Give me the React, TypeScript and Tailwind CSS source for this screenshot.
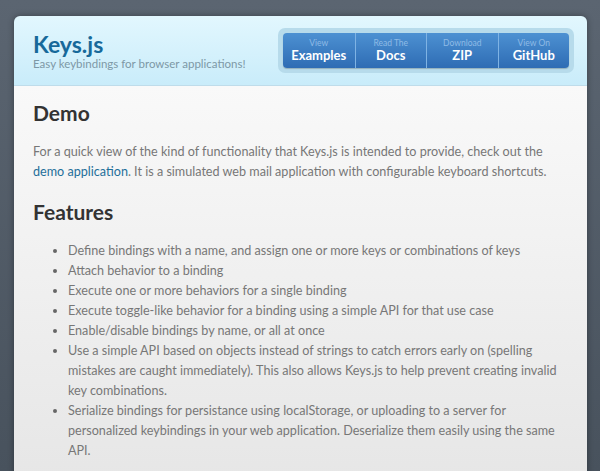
const links = [
  { top: 'View', label: 'Examples' },
  { top: 'Read The', label: 'Docs' },
  { top: 'Download', label: 'ZIP' },
  { top: 'View On', label: 'GitHub' },
];

const features = [
  'Define bindings with a name, and assign one or more keys or combinations of keys',
  'Attach behavior to a binding',
  'Execute one or more behaviors for a single binding',
  'Execute toggle-like behavior for a binding using a simple API for that use case',
  'Enable/disable bindings by name, or all at once',
  'Use a simple API based on objects instead of strings to catch errors early on (spelling mistakes are caught immediately). This also allows Keys.js to help prevent creating invalid key combinations.',
  'Serialize bindings for persistance using localStorage, or uploading to a server for personalized keybindings in your web application. Deserialize them easily using the same API.',
];

export default function App() {
  return (
    <div className="h-[471px] overflow-hidden bg-gradient-to-b from-[#5b6571] to-[#48525d] pl-[14px] pr-[13px] pt-[16px] font-['Lato',sans-serif]">
      <div className="overflow-hidden rounded-t-[6px] shadow-[0_0_6px_rgba(0,0,0,0.35)]">
        <header className="flex h-[70px] items-center justify-between border-b border-[#bfdcea] bg-gradient-to-b from-[#e2f7fe] to-[#c9ecfa] pl-[19px] pr-[13px]">
          <div>
            <h1 className="text-[23px] font-bold leading-[26px] text-[#17699a]">Keys.js</h1>
            <p className="text-[11.5px] leading-[14px] text-[#7d98a6]">Easy keybindings for browser applications!</p>
          </div>
          <nav className="rounded-[7px] bg-[#b7dbeb] p-[5px]">
            <div className="flex overflow-hidden rounded-[4px] bg-gradient-to-b from-[#4d91d2] to-[#2e6cb4] shadow-[0_1px_1px_rgba(0,0,0,0.2)]">
              {links.map((link, i) => (
                <a
                  key={link.label}
                  href="#"
                  className={`flex h-[35px] w-[71.5px] flex-col items-center justify-center ${i > 0 ? 'border-l border-[#7fb3e4]' : ''}`}
                >
                  <span className="text-[8.5px] leading-[9px] text-[#8fbbe6]">{link.top}</span>
                  <span className="text-[13px] font-bold leading-[15px] text-white">{link.label}</span>
                </a>
              ))}
            </div>
          </nav>
        </header>
        <main className="h-[400px] bg-gradient-to-b from-[#f9f9f9] to-[#e6e6e6] px-[19px] pt-[14px]">
          <h2 className="text-[21px] font-bold leading-[26px] text-[#333]">Demo</h2>
          <p className="mt-[16px] text-[12.6px] leading-[20px] text-[#777]">
            For a quick view of the kind of functionality that Keys.js is intended to provide, check out the{' '}
            <a href="#" className="text-[#1f6f9a]">demo application</a>. It is a simulated web mail application with configurable keyboard shortcuts.
          </p>
          <h2 className="mt-[17px] text-[21px] font-bold leading-[26px] text-[#333]">Features</h2>
          <ul className="mt-[16px] list-disc pl-[35px] text-[12.6px] leading-[20px] text-[#777] marker:text-[#666]">
            {features.map((f) => (
              <li key={f}>{f}</li>
            ))}
          </ul>
        </main>
      </div>
    </div>
  );
}
